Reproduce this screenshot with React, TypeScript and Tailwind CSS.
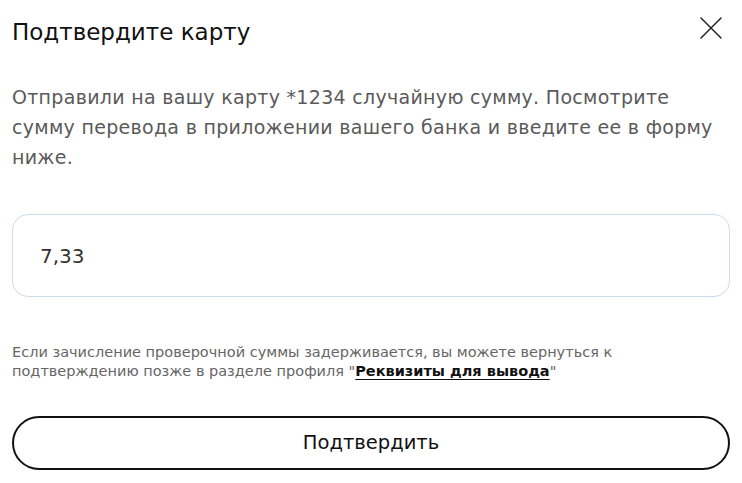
export default function App() {
  return (
    <div className="w-[742px] h-[483px] bg-white px-3 pt-[17px] font-['DejaVu_Sans','Noto_Sans',sans-serif]">
      {/* Header */}
      <div className="flex items-center justify-between h-[30px]">
        <h2 className="text-[23px] leading-[30px] text-[#111]">
          Подтвердите карту
        </h2>
        <button className="mr-[8px] -mt-[8px] text-[#222]">
          <svg width="22" height="22" viewBox="0 0 22 22" fill="none" stroke="currentColor" strokeWidth="1.5" strokeLinecap="round">
            <path d="M1 1L21 21M21 1L1 21" />
          </svg>
        </button>
      </div>

      {/* Description */}
      <p className="mt-[35px] text-[19px] leading-[30px] text-[#5a5a5a] tracking-[0.3px]">
        Отправили на вашу карту *1234 случайную сумму. Посмотрите сумму перевода в приложении вашего банка и введите ее в форму ниже.
      </p>

      {/* Amount input */}
      <div className="mt-[42px] h-[83px] rounded-2xl border border-[#cadcee] flex items-center px-[27px]">
        <input
          defaultValue="7,33"
          className="w-full outline-none text-[20px] text-[#333] bg-transparent"
        />
      </div>

      {/* Hint */}
      <p className="mt-[46px] text-[14.5px] leading-[19px] text-[#666]">
        Если зачисление проверочной суммы задерживается, вы можете вернуться к подтверждению позже в разделе профиля "<a className="font-bold text-[#111] underline underline-offset-[3px]">Реквизиты для вывода</a>"
      </p>

      {/* Submit */}
      <button className="mt-[35px] w-full h-[54px] rounded-full border-2 border-[#111] text-[19.5px] text-[#111]">
        Подтвердить
      </button>
    </div>
  );
}
